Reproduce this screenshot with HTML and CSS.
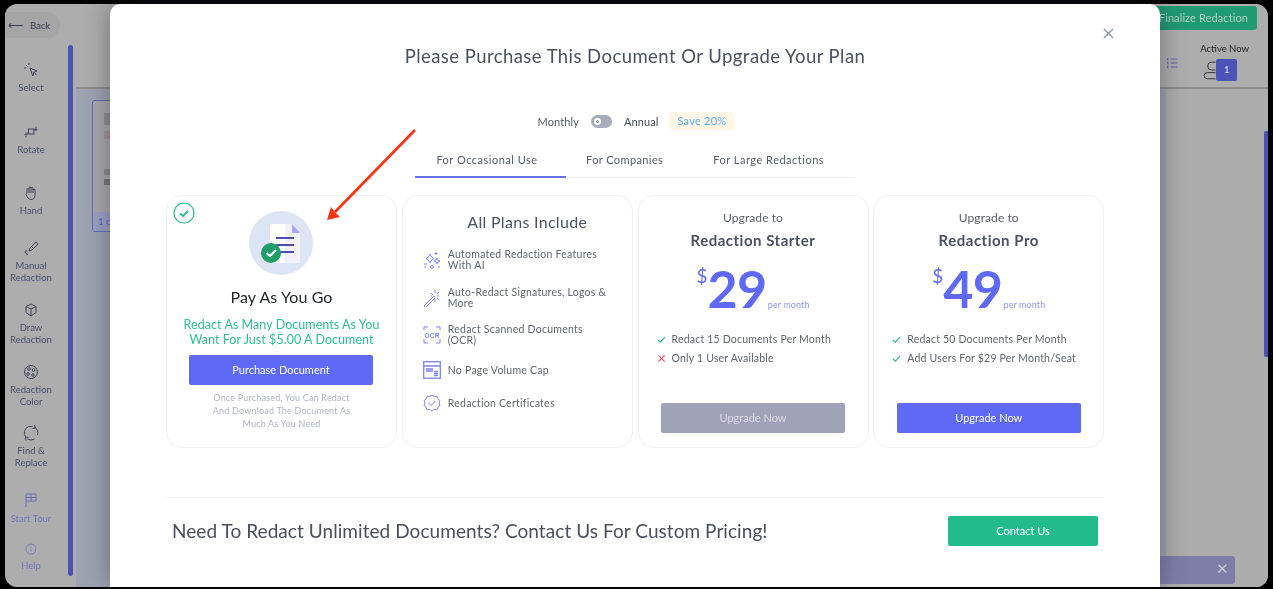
FILE: index.html
```html
<!DOCTYPE html>
<html lang="en">
<head>
<meta charset="utf-8">
<title>Purchase</title>
<link rel="stylesheet" href="styles.css">
</head>
<body>
<div class="frame">
  <div class="app">
    <aside class="sidebar">
      <div class="back"><span class="back-arrow">⟵</span>Back</div>
      <div class="tools">
        <div class="tool"><svg class="ti" viewBox="0 0 16 16"><path d="M7 6l7 3-3 1.200L9.800 14zM11 10.200l2.500 3"/><path d="M3 3l1.500 1.500M6 1v2M1 6h2"/></svg><span>Select</span></div>
        <div class="tool"><svg class="ti" viewBox="0 0 16 16"><rect x="5.500" y="5" width="5.500" height="5"/><path d="M3 13.500V9.500l-1.500 1.500M3 9.500l1.500 1.500M5.500 9H3M13 2.500v4l1.500-1.500M13 6.500L11.500 5M10.500 6H13"/></svg><span>Rotate</span></div>
        <div class="tool"><svg class="ti" viewBox="0 0 16 16"><path d="M4 8V4.500a1 1 0 0 1 2 0V3a1 1 0 0 1 2 0v.5a1 1 0 0 1 2 0V5a1 1 0 0 1 2 0v6c0 2-2 3.500-4 3.500S4.500 13 3 9.500c0-1 1-1.500 1-1.500zM6 4.500V8M8 3.500V8M10 4v4"/></svg><span>Hand</span></div>
        <div class="tool"><svg class="ti" viewBox="0 0 16 16"><path d="M7 8l6-6 2 2-6 6-3 1zM8.500 6.500l2 2M4.500 11C1.500 10.500 1 12.500 3 13s2 2 0 2"/></svg><span>Manual<br>Redaction</span></div>
        <div class="tool"><svg class="ti" viewBox="0 0 16 16"><path d="M8 2l5 2.500v6L8 14l-5-3.500v-6zM3 4.500L8 7l5-2.500M8 7v7"/></svg><span>Draw<br>Redaction</span></div>
        <div class="tool"><svg class="ti" viewBox="0 0 16 16"><circle cx="8" cy="8" r="6.500"/><circle cx="6" cy="5" r="1.300"/><circle cx="10.500" cy="6" r="1.300"/><circle cx="5" cy="10" r="1.300"/><circle cx="10" cy="11" r="1.300"/></svg><span>Redaction<br>Color</span></div>
        <div class="tool"><svg class="ti" viewBox="0 0 16 16"><path d="M11 1.800A7 7 0 0 1 14.500 10M11.500 14a7 7 0 0 1-7 0M3 12.500A7 7 0 0 1 5.500 1.500h4M11.500 0l1 3-3 .5M3 15.500l-.5-3.500 3 .5"/></svg><span>Find &amp;<br>Replace</span></div>
        <div class="tool tool-muted"><svg class="ti" viewBox="0 0 16 16"><path d="M3 15V2h10v7H3M8 2v7M3 5.500h10"/></svg><span>Start Tour</span></div>
        <div class="tool tool-muted"><svg class="ti" viewBox="0 0 16 16"><circle cx="8" cy="8" r="6.500"/><path d="M8 7v4M8 4.500v1"/></svg><span>Help</span></div>
      </div>
    </aside>
    <div class="side-scroll"></div>
    <main class="main">
      <header class="topbar">
        <div class="finalize">Finalize Redaction</div>
        <div class="active-row">
          <svg class="list-icon" viewBox="0 0 12 12"><path d="M4.500 2H11.500M4.500 6H11.500M4.500 10H11.500M1 1.500h1.500M1 2.800h1.500M1 5.500h1.500M1 6.800h1.500M1 9.500h1.500M1 10.800h1.500"/></svg>
          <div class="active">
            <div class="active-label">Active Now</div>
            <div class="active-users">
              <svg class="person" viewBox="0 0 16 22"><path d="M15.500 2H11a4.500 4.500 0 0 0 0 9h4.500M15.500 14H6a3.500 3.500 0 0 0 0 7h9.500"/></svg>
              <span class="count">1</span>
            </div>
          </div>
        </div>
      </header>
      <div class="canvas">
        <div class="thumb"><div class="thumb-foot">1 c</div></div>
        <div class="page-scroll"></div>
      </div>
    </main>
    <div class="toast"><span class="toast-x">✕</span></div>
  </div>

  <section class="modal">
    <svg class="close" viewBox="0 0 12 12"><path d="M1 1l10 10M11 1L1 11"/></svg>
    <h1 class="title">Please Purchase This Document Or Upgrade Your Plan</h1>
    <div class="billing">
      <span>Monthly</span>
      <span class="switch"><span class="knob"></span></span>
      <span class="annual">Annual</span>
      <span class="save">Save 20%</span>
    </div>
    <nav class="tabs">
      <span class="tab tab-on">For Occasional Use</span>
      <span class="tab tab-mid">For Companies</span>
      <span class="tab tab-end">For Large Redactions</span>
    </nav>
    <div class="cards">
      <article class="card card-go">
        <svg class="chosen" viewBox="0 0 22 22"><circle cx="11" cy="11" r="10"/><path d="M7 11.500l3 2.500 5-5"/></svg>
        <svg class="doc" viewBox="0 0 64 64">
          <circle cx="32" cy="32" r="32" fill="#dde4f4"/>
          <path d="M23 13h20l8 9v29a1 1 0 0 1-1 1H23a2 2 0 0 1-2-2V15a2 2 0 0 1 2-2z" fill="#f1f1f7"/>
          <path d="M23 13h13v39H23a2 2 0 0 1-2-2V15a2 2 0 0 1 2-2z" fill="#fff"/>
          <path d="M43 13l8 9h-8z" fill="#a7a9f5"/>
          <path d="M27 27h18M27 34h18M27 41h18" stroke="#4c4fb0" stroke-width="2" fill="none"/>
          <circle cx="22" cy="42" r="10" fill="#1f9e68"/>
          <path d="M17.500 42l3.500 3 6-6" stroke="#fff" stroke-width="2.200" fill="none"/>
        </svg>
        <h2 class="go-title">Pay As You Go</h2>
        <p class="go-text">Redact As Many Documents As You<br>Want For Just $5.00 A Document</p>
        <a class="btn btn-go">Purchase Document</a>
        <p class="go-note">Once Purchased, You Can Redact<br>And Download The Document As<br>Much As You Need</p>
      </article>

      <article class="card card-all">
        <h2 class="all-title">All Plans Include</h2>
        <ul class="feat">
          <li class="f1"><svg class="fi" viewBox="0 0 18 18"><path d="M7 3l1.500 3L11 7.500 8.500 9 7 12 5.500 9 3 7.500 5.500 6zM14 7l1 2 2 1-2 1-1 2-1-2-2-1 2-1zM9 14l.7 1.300L11 16l-1.300.7L9 18l-.7-1.300L7 16l1.300-.7zM13 1v3M11.500 2.500h3M1 13h3M1 16h2M15 16h2"/></svg><span>Automated Redaction Features<br>With AI</span></li>
          <li class="f2"><svg class="fi" viewBox="0 0 18 18"><path d="M1 17l10-10 1.500 1.500-10 10zM12 1v3M12 10v3M16 7h-2M8 4l2 2M16 3l-2 2M14 9l2 2M9 7h-1"/></svg><span>Auto-Redact Signatures, Logos &amp;<br>More</span></li>
          <li class="f3"><svg class="fi" viewBox="0 0 18 18"><path d="M1 4V1h4M13 1h4v3M1 13v4h4M13 17h4v-4"/><text class="ocr-t" x="9" y="11.500">OCR</text></svg><span>Redact Scanned Documents<br>(OCR)</span></li>
          <li class="f4"><svg class="fi fi-bold" viewBox="0 0 18 18"><rect x=".7" y=".7" width="16.600" height="16.600"/><path d="M1 5h16M3 8h7M3 10h7M11 10.500h4M11 12.500h4M11 14.500h4"/></svg><span>No Page Volume Cap</span></li>
          <li class="f5"><svg class="fi" viewBox="0 0 18 18"><path d="M9 1l2.300 1.500 2.700-.2 1 2.500 2 1.800-1 2.400 1 2.400-2 1.800-1 2.500-2.700-.2L9 17l-2.300-1.500-2.700.2-1-2.500-2-1.800 1-2.400-1-2.400 2-1.800 1-2.500 2.700.2z"/><path d="M5.500 9l2.500 2.500 4.500-4.500"/></svg><span>Redaction Certificates</span></li>
        </ul>
      </article>

      <article class="card card-plan">
        <div class="up">Upgrade to</div>
        <h2 class="plan-name">Redaction Starter</h2>
        <div class="price"><span class="dollar">$</span><span class="amount">29</span><span class="per">per month</span></div>
        <ul class="perks">
          <li><svg class="mark mark-yes" viewBox="0 0 10 10"><path d="M1 5.500l2.800 2.500L9 2"/></svg>Redact 15 Documents Per Month</li>
          <li><svg class="mark mark-no" viewBox="0 0 10 10"><path d="M1.500 1.500l7 7M8.500 1.500l-7 7"/></svg>Only 1 User Available</li>
        </ul>
        <a class="btn btn-off">Upgrade Now</a>
      </article>

      <article class="card card-plan">
        <div class="up">Upgrade to</div>
        <h2 class="plan-name">Redaction Pro</h2>
        <div class="price"><span class="dollar">$</span><span class="amount">49</span><span class="per">per month</span></div>
        <ul class="perks">
          <li><svg class="mark mark-yes" viewBox="0 0 10 10"><path d="M1 5.500l2.800 2.500L9 2"/></svg>Redact 50 Documents Per Month</li>
          <li><svg class="mark mark-yes" viewBox="0 0 10 10"><path d="M1 5.500l2.800 2.500L9 2"/></svg>Add Users For $29 Per Month/Seat</li>
        </ul>
        <a class="btn btn-go">Upgrade Now</a>
      </article>
    </div>
    <footer class="contact">
      <h3 class="contact-text">Need To Redact Unlimited Documents? Contact Us For Custom Pricing!</h3>
      <a class="btn-contact">Contact Us</a>
    </footer>
  </section>

  <svg class="arrow" viewBox="0 0 1273 589"><path d="M415 130L335 212" stroke="#f5361a" stroke-width="2.800" fill="none"/><path d="M327 220l4-13 4 5 5 5z" fill="#f5361a"/></svg>
</div>
</body>
</html>
```
FILE: styles.css
```css
* { box-sizing: border-box; }
html, body { margin: 0; padding: 0; }
body { font-family: "Lato", "Noto Sans", sans-serif; overflow: hidden; }
h1, h2, h3, p, ul { margin: 0; padding: 0; }
ul { list-style: none; }

.frame { position: relative; width: 1273px; height: 589px; background: #000; padding: 4px 5px 2px 5px; overflow: hidden; }
.app { display: flex; height: 100%; background: #adadad; border-radius: 12px; overflow: hidden; position: relative; filter: blur(.4px); }

/* blurred application behind the dialog */
.sidebar { width: 63px; flex: none; color: #4b4f6e; font-size: 9.500px; text-align: center; }
.back { width: 55px; height: 26px; margin-top: 8px; background: #a5a5a5; border-radius: 0 13px 13px 0; color: #3d4058; font-size: 9.500px; line-height: 26px; text-align: left; padding-left: 3px; white-space: nowrap; }
.back-arrow { font-size: 11px; margin-right: 6px; }
.tools { display: grid; width: 52px; grid-template-rows: 62px 61px 55px 62px 62px 61px 67px 51px 30px; margin-top: 24px; justify-items: center; }
.tool { display: flex; flex-direction: column; align-items: center; line-height: 12.700px; width: 52px; }
.tool span { display: block; margin-top: 3.500px; }
.ti { width: 16px; height: 16px; fill: none; stroke: #42465f; stroke-width: 1; display: block; }
.tool-muted { color: #7378b8; }
.tool-muted span { margin-top: 5px; }
.tool-muted .ti { stroke: #6a70c0; }
.side-scroll { width: 5px; height: 531px; flex: none; margin-top: 41px; background: #4a52b4; border-radius: 3px; }
.main { flex: 1; min-width: 0; margin-left: 3px; display: flex; flex-direction: column; }
.topbar { height: 85px; flex: none; border-bottom: 2px solid #8e8e8e; display: flex; flex-direction: column; align-items: flex-end; padding-right: 11px; }
.finalize { width: 110px; height: 24px; margin: 2px 0 0; background: #1f9a72; color: #b6cfc4; font-size: 11px; letter-spacing: .1px; line-height: 24px; border-radius: 0 3px 3px 0; text-align: right; padding-right: 9px; white-space: nowrap; }
.active-row { display: flex; align-items: flex-end; gap: 22px; margin-top: 13px; padding-right: 8px; }
.list-icon { width: 12px; height: 12px; fill: none; stroke: #5a60bb; stroke-width: 1; margin-bottom: 12px; }
.active-label { font-size: 9.500px; color: #1f1f22; line-height: 12px; text-align: center; }
.active-users { display: flex; align-items: center; margin-top: 4px; }
.person { width: 14px; height: 22px; fill: none; stroke: #33343c; stroke-width: 1.100; margin-left: 2px; }
.count { width: 21px; height: 22px; background: #4a54b8; border-radius: 2px; color: #cfd2f0; font-size: 8.500px; font-weight: 700; line-height: 22px; text-align: center; }
.canvas { flex: 1; position: relative; display: flex; justify-content: space-between; padding: 11px 0 0 16px; background: linear-gradient(90deg, #9ea3b1 0 1090px, #acacac 1090px); }
.thumb { width: 60px; height: 132px; border: 1px solid #6168c4; border-radius: 3px; background: #a8a8ac; position: relative; }
.thumb::before { content: ""; position: absolute; left: 11px; top: 12px; width: 8px; height: 84px; background: linear-gradient(#8d8d90 0 12px, transparent 12px 18px, #a59295 18px 26px, transparent 26px 56px, #8a8a8c 56px 62px, transparent 62px 66px, #77777a 66px 72px, transparent 72px); }
.thumb-foot { position: absolute; left: 0; right: 0; bottom: 0; height: 19px; background: #9ba1c0; color: #5a62c0; font-size: 9.500px; line-height: 19px; padding-left: 5px; }
.page-scroll { width: 4px; height: 226px; margin-top: 31px; background: #4a52b4; border-radius: 2px 0 0 2px; }
.toast { position: absolute; right: 33px; bottom: 3px; width: 200px; height: 28px; background: #7d7da8; border-radius: 3px; color: #c5c5cf; text-align: right; padding-right: 6px; line-height: 25px; font-size: 15px; }

/* dialog */
.modal { position: absolute; left: 110px; top: 4px; width: 1050px; height: 583px; background: #fff; padding: 0 56px; box-shadow: 0 0 26px rgba(40, 40, 50, .45); border-radius: 10px 10px 0 0; overflow: hidden; }
.close { position: absolute; right: 46px; top: 24px; width: 11px; height: 11px; fill: none; stroke: #8d98ad; stroke-width: 1.500; }
.title { text-align: center; font-size: 18.500px; font-weight: 400; color: #4a5160; line-height: 24px; padding-top: 40px; height: 64px; letter-spacing: .44px; }
.billing { display: flex; justify-content: center; align-items: center; gap: 12px; margin-top: 43px; height: 20px; padding-left: 2px; font-size: 11px; color: #555b68; letter-spacing: .1px; }
.switch { width: 21px; height: 13px; background: #a6adbd; border-radius: 7px; display: flex; align-items: center; padding-left: 3px; }
.knob { width: 7px; height: 7px; border-radius: 50%; background: #fff; border: 2px solid #fff; box-shadow: inset 0 0 0 1px #888; }
.annual { color: #444a58; }
.save { background: #fff6e6; color: #5aaef5; padding: 0 8px; height: 18px; line-height: 18px; border-radius: 4px; margin-left: -1px; letter-spacing: .25px; }
.tabs { display: flex; margin: 15px 0 0 249px; width: 440px; height: 32px; border-bottom: 1px solid #eeeef4; }
.tab { height: 32px; font-size: 11px; line-height: 27px; color: #555b68; white-space: nowrap; }
.tab-on { width: 151px; padding-right: 7px; text-align: center; border-bottom: 2px solid #6a72f2; letter-spacing: .5px; }
.tab-mid { padding-left: 20px; letter-spacing: .4px; }
.tab-end { padding-left: 50px; letter-spacing: .5px; }
.cards { display: grid; grid-template-columns: repeat(4, 231px); column-gap: 4.750px; margin-top: 17px; }
.card { height: 253px; border: 1px solid #f0f0f4; border-radius: 16px; position: relative; text-align: center; }
.chosen { position: absolute; left: 6px; top: 6px; width: 22px; height: 22px; fill: none; stroke: #2fbb8e; stroke-width: 1.200; }
.chosen path { stroke-width: 1.800; }
.doc { display: block; width: 64px; height: 64px; margin: 15px 0 0 82px; }
.go-title { font-size: 16px; font-weight: 400; color: #23262e; line-height: 20px; margin-top: 12px; letter-spacing: .1px; }
.go-text { font-size: 12.500px; color: #2ebf92; line-height: 15px; margin-top: 10px; letter-spacing: .05px; }
.btn { display: block; width: 184px; height: 30px; margin: 0 auto; font-size: 11px; line-height: 30px; border-radius: 2px; }
.btn-go { background: #5e6af5; color: #fff; }
.btn-off { background: #a0a3b8; color: #d8d9e2; }
.card-go .btn { margin: 8px 0 0 22px; }
.go-note { font-size: 9px; color: #b0b3c4; line-height: 13px; margin-top: 6px; letter-spacing: .2px; }
.all-title { font-size: 16px; font-weight: 400; color: #4a5160; line-height: 20px; padding-top: 16px; height: 53px; padding-left: 20px; text-align: center; letter-spacing: .3px; }
.feat { padding-left: 20px; text-align: left; font-size: 10.500px; color: #5f6470; line-height: 11px; letter-spacing: .25px; }
.feat li { display: flex; align-items: center; gap: 7px; }
.f1 { height: 18px; margin-top: 2px; }
.f2 { height: 22px; margin-top: 18px; }
.f3 { height: 22px; margin-top: 15px; }
.f4 { height: 18px; margin-top: 15px; }
.f5 { height: 18px; margin-top: 15px; }
.fi { width: 18px; height: 18px; flex: none; fill: none; stroke: #7f84f5; stroke-width: 1; }
.fi-bold { stroke-width: 1.300; }
.ocr-t { fill: #7f84f5; stroke: none; font-family: "Liberation Sans", sans-serif; font-size: 6.500px; font-weight: 700; text-anchor: middle; }
.up { font-size: 12px; color: #5b606c; line-height: 15px; padding-top: 14px; height: 29px; letter-spacing: .1px; }
.plan-name { font-size: 15px; font-weight: 700; color: #4a5160; line-height: 20px; margin-top: 5px; letter-spacing: .5px; }
.price { display: flex; justify-content: center; height: 52px; margin-top: 8px; color: #5e6af5; }
.dollar { font-size: 19px; line-height: 22px; margin-top: 7px; }
.amount { font-size: 52px; font-weight: 700; line-height: 60px; letter-spacing: -.5px; }
.per { font-size: 9px; color: #8f96f5; align-self: flex-end; margin-left: 1px; line-height: 11px; letter-spacing: .1px; }
.perks { margin-top: 20px; padding-left: 18px; text-align: left; font-size: 10.500px; color: #5f6470; line-height: 19px; letter-spacing: .2px; height: 73px; }
.perks li { display: flex; align-items: center; }
.mark { width: 9px; height: 9px; flex: none; margin-right: 6px; fill: none; stroke-width: 1.300; }
.mark-yes { stroke: #35b98c; }
.mark-no { stroke: #ee4f6a; }
.contact { display: flex; align-items: center; justify-content: space-between; margin-top: 49px; height: 66px; border-top: 1px solid #f1f1f4; padding: 0 6px; }
.contact-text { font-size: 19px; font-weight: 400; color: #4a4f5c; letter-spacing: .06px; }
.btn-contact { width: 150px; height: 30px; background: #22bb8b; color: #fff; font-size: 11px; line-height: 30px; text-align: center; border-radius: 2px; }
.arrow { position: absolute; left: 0; top: 0; width: 1273px; height: 589px; pointer-events: none; }
```
